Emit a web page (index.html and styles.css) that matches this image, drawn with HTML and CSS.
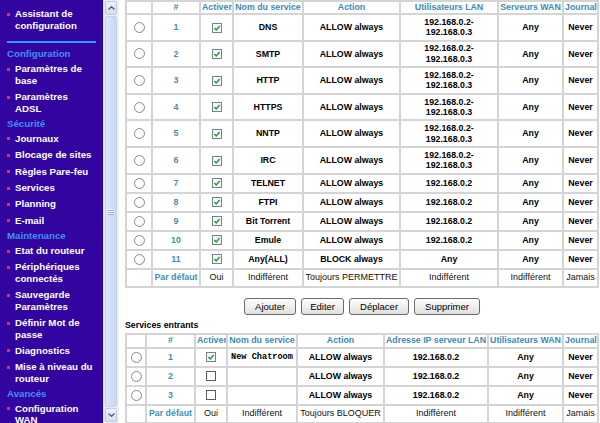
FILE: index.html
```html
<!DOCTYPE html>
<html lang="fr">
<head>
<meta charset="utf-8">
<title>Services</title>
<link rel="stylesheet" href="styles.css">
</head>
<body>
<div class="layout">
  <nav class="sidebar">
    <div class="item"><span class="bullet"></span><span>Assistant de<br>configuration</span></div>
    <hr class="divider">
    <div class="heading">Configuration</div>
    <div class="item"><span class="bullet"></span><span>Paramètres de<br>base</span></div>
    <div class="item"><span class="bullet"></span><span>Paramètres<br>ADSL</span></div>
    <div class="heading">Sécurité</div>
    <div class="item"><span class="bullet"></span><span>Journaux</span></div>
    <div class="item"><span class="bullet"></span><span>Blocage de sites</span></div>
    <div class="item"><span class="bullet"></span><span>Règles Pare-feu</span></div>
    <div class="item"><span class="bullet"></span><span>Services</span></div>
    <div class="item"><span class="bullet"></span><span>Planning</span></div>
    <div class="item"><span class="bullet"></span><span>E-mail</span></div>
    <div class="heading">Maintenance</div>
    <div class="item"><span class="bullet"></span><span>Etat du routeur</span></div>
    <div class="item"><span class="bullet"></span><span>Périphériques<br>connectés</span></div>
    <div class="item"><span class="bullet"></span><span>Sauvegarde<br>Paramètres</span></div>
    <div class="item"><span class="bullet"></span><span>Définir Mot de<br>passe</span></div>
    <div class="item"><span class="bullet"></span><span>Diagnostics</span></div>
    <div class="item"><span class="bullet"></span><span>Mise à niveau du<br>routeur</span></div>
    <div class="heading">Avancés</div>
    <div class="item"><span class="bullet"></span><span>Configuration<br>WAN</span></div>
  </nav>
  <div class="scrollbar">
    <div class="sb-btn"><svg viewBox="0 0 7 4" width="7" height="4"><path d="M0.5 3.5 L3.5 0.8 L6.5 3.5" fill="none" stroke="#4d6185" stroke-width="1.4"/></svg></div>
    <div class="sb-track"><div class="sb-thumb"><span class="grip"></span></div></div>
    <div class="sb-btn"><svg viewBox="0 0 7 4" width="7" height="4"><path d="M0.5 0.5 L3.5 3.2 L6.5 0.5" fill="none" stroke="#4d6185" stroke-width="1.4"/></svg></div>
  </div>
  <main class="content">
    <table class="grid out">
      <colgroup><col class="w26"><col class="w48"><col class="w33"><col class="w70"><col class="w97"><col class="w98"><col class="w65"><col class="w35"></colgroup>
      <tr class="head"><th></th><th>#</th><th>Activer</th><th>Nom du service</th><th>Action</th><th>Utilisateurs LAN</th><th>Serveurs WAN</th><th>Journal</th></tr>
      <tr class="tall"><td><span class="radio"></span></td><td class="num">1</td><td><svg class="check" viewBox="0 0 10 10"><rect x="0.5" y="0.5" width="9" height="9" fill="#f7f7f7" stroke="#71839a"/><path d="M2.4 5 L4.2 6.9 L7.7 3" fill="none" stroke="#22a022" stroke-width="1.5"/></svg></td><td>DNS</td><td>ALLOW always</td><td>192.168.0.2-<br>192.168.0.3</td><td>Any</td><td>Never</td></tr>
      <tr class="tall"><td><span class="radio"></span></td><td class="num">2</td><td><svg class="check" viewBox="0 0 10 10"><rect x="0.5" y="0.5" width="9" height="9" fill="#f7f7f7" stroke="#71839a"/><path d="M2.4 5 L4.2 6.9 L7.7 3" fill="none" stroke="#22a022" stroke-width="1.5"/></svg></td><td>SMTP</td><td>ALLOW always</td><td>192.168.0.2-<br>192.168.0.3</td><td>Any</td><td>Never</td></tr>
      <tr class="tall"><td><span class="radio"></span></td><td class="num">3</td><td><svg class="check" viewBox="0 0 10 10"><rect x="0.5" y="0.5" width="9" height="9" fill="#f7f7f7" stroke="#71839a"/><path d="M2.4 5 L4.2 6.9 L7.7 3" fill="none" stroke="#22a022" stroke-width="1.5"/></svg></td><td>HTTP</td><td>ALLOW always</td><td>192.168.0.2-<br>192.168.0.3</td><td>Any</td><td>Never</td></tr>
      <tr class="tall"><td><span class="radio"></span></td><td class="num">4</td><td><svg class="check" viewBox="0 0 10 10"><rect x="0.5" y="0.5" width="9" height="9" fill="#f7f7f7" stroke="#71839a"/><path d="M2.4 5 L4.2 6.9 L7.7 3" fill="none" stroke="#22a022" stroke-width="1.5"/></svg></td><td>HTTPS</td><td>ALLOW always</td><td>192.168.0.2-<br>192.168.0.3</td><td>Any</td><td>Never</td></tr>
      <tr class="tall"><td><span class="radio"></span></td><td class="num">5</td><td><svg class="check" viewBox="0 0 10 10"><rect x="0.5" y="0.5" width="9" height="9" fill="#f7f7f7" stroke="#71839a"/><path d="M2.4 5 L4.2 6.9 L7.7 3" fill="none" stroke="#22a022" stroke-width="1.5"/></svg></td><td>NNTP</td><td>ALLOW always</td><td>192.168.0.2-<br>192.168.0.3</td><td>Any</td><td>Never</td></tr>
      <tr class="tall"><td><span class="radio"></span></td><td class="num">6</td><td><svg class="check" viewBox="0 0 10 10"><rect x="0.5" y="0.5" width="9" height="9" fill="#f7f7f7" stroke="#71839a"/><path d="M2.4 5 L4.2 6.9 L7.7 3" fill="none" stroke="#22a022" stroke-width="1.5"/></svg></td><td>IRC</td><td>ALLOW always</td><td>192.168.0.2-<br>192.168.0.3</td><td>Any</td><td>Never</td></tr>
      <tr class="short"><td><span class="radio"></span></td><td class="num">7</td><td><svg class="check" viewBox="0 0 10 10"><rect x="0.5" y="0.5" width="9" height="9" fill="#f7f7f7" stroke="#71839a"/><path d="M2.4 5 L4.2 6.9 L7.7 3" fill="none" stroke="#22a022" stroke-width="1.5"/></svg></td><td>TELNET</td><td>ALLOW always</td><td>192.168.0.2</td><td>Any</td><td>Never</td></tr>
      <tr class="short"><td><span class="radio"></span></td><td class="num">8</td><td><svg class="check" viewBox="0 0 10 10"><rect x="0.5" y="0.5" width="9" height="9" fill="#f7f7f7" stroke="#71839a"/><path d="M2.4 5 L4.2 6.9 L7.7 3" fill="none" stroke="#22a022" stroke-width="1.5"/></svg></td><td>FTPI</td><td>ALLOW always</td><td>192.168.0.2</td><td>Any</td><td>Never</td></tr>
      <tr class="short"><td><span class="radio"></span></td><td class="num">9</td><td><svg class="check" viewBox="0 0 10 10"><rect x="0.5" y="0.5" width="9" height="9" fill="#f7f7f7" stroke="#71839a"/><path d="M2.4 5 L4.2 6.9 L7.7 3" fill="none" stroke="#22a022" stroke-width="1.5"/></svg></td><td>Bit Torrent</td><td>ALLOW always</td><td>192.168.0.2</td><td>Any</td><td>Never</td></tr>
      <tr class="short"><td><span class="radio"></span></td><td class="num">10</td><td><svg class="check" viewBox="0 0 10 10"><rect x="0.5" y="0.5" width="9" height="9" fill="#f7f7f7" stroke="#71839a"/><path d="M2.4 5 L4.2 6.9 L7.7 3" fill="none" stroke="#22a022" stroke-width="1.5"/></svg></td><td>Emule</td><td>ALLOW always</td><td>192.168.0.2</td><td>Any</td><td>Never</td></tr>
      <tr class="short"><td><span class="radio"></span></td><td class="num">11</td><td><svg class="check" viewBox="0 0 10 10"><rect x="0.5" y="0.5" width="9" height="9" fill="#f7f7f7" stroke="#71839a"/><path d="M2.4 5 L4.2 6.9 L7.7 3" fill="none" stroke="#22a022" stroke-width="1.5"/></svg></td><td>Any(ALL)</td><td>BLOCK always</td><td>Any</td><td>Any</td><td>Never</td></tr>
      <tr class="default"><td></td><td class="num">Par défaut</td><td>Oui</td><td>Indifférent</td><td>Toujours PERMETTRE</td><td>Indifférent</td><td>Indifférent</td><td>Jamais</td></tr>
    </table>

    <div class="buttons">
      <button class="btn">Ajouter</button>
      <button class="btn btn-narrow">Editer</button>
      <button class="btn">Déplacer</button>
      <button class="btn">Supprimer</button>
    </div>

    <div class="caption">Services entrants</div>

    <table class="grid in">
      <colgroup><col class="w20"><col class="w49"><col class="w32"><col class="w70"><col class="w87"><col class="w104"><col class="w75"><col class="w35"></colgroup>
      <tr class="head2"><th></th><th>#</th><th>Activer</th><th>Nom du service</th><th>Action</th><th>Adresse IP serveur LAN</th><th>Utilisateurs WAN</th><th>Journal</th></tr>
      <tr class="short"><td><span class="radio"></span></td><td class="num">1</td><td><svg class="check" viewBox="0 0 10 10"><rect x="0.5" y="0.5" width="9" height="9" fill="#f7f7f7" stroke="#71839a"/><path d="M2.4 5 L4.2 6.9 L7.7 3" fill="none" stroke="#22a022" stroke-width="1.5"/></svg></td><td class="mono">New Chatroom</td><td>ALLOW always</td><td>192.168.0.2</td><td>Any</td><td>Never</td></tr>
      <tr class="short"><td><span class="radio"></span></td><td class="num">2</td><td><svg class="check" viewBox="0 0 10 10"><rect x="0.5" y="0.5" width="9" height="9" fill="#ffffff" stroke="#5a5a5a"/></svg></td><td></td><td>ALLOW always</td><td>192.168.0.2</td><td>Any</td><td>Never</td></tr>
      <tr class="short"><td><span class="radio"></span></td><td class="num">3</td><td><svg class="check" viewBox="0 0 10 10"><rect x="0.5" y="0.5" width="9" height="9" fill="#ffffff" stroke="#5a5a5a"/></svg></td><td></td><td>ALLOW always</td><td>192.168.0.2</td><td>Any</td><td>Never</td></tr>
      <tr class="default"><td></td><td class="num">Par défaut</td><td>Oui</td><td>Indifférent</td><td>Toujours BLOQUER</td><td>Indifférent</td><td>Indifférent</td><td>Jamais</td></tr>
    </table>
  </main>
</div>
</body>
</html>
```

FILE: styles.css
```css
* { box-sizing: border-box; }

html, body {
  margin: 0;
  padding: 0;
}

body {
  width: 600px;
  height: 423px;
  overflow: hidden;
  background: #ffffff;
  font-family: "Liberation Sans", Arial, sans-serif;
}

.layout {
  display: flex;
  height: 423px;
}

/* ---------- Sidebar ---------- */
.sidebar {
  width: 103px;
  flex: none;
  background: #3205a0;
  color: #ffffff;
  padding: 8.3px 0 0 7px;
  overflow: hidden;
  font-size: 9.7px;
  font-weight: bold;
  line-height: 11.4px;
}

.item {
  display: flex;
  gap: 5px;
  margin-bottom: 5px;
}

.bullet {
  flex: none;
  width: 3px;
  height: 3px;
  margin-top: 4.5px;
  background: #d6384f;
}

.heading {
  color: #3c92f4;
  margin-top: -1.3px;
  margin-bottom: 3.7px;
}

.divider {
  border: 0;
  width: 89px;
  height: 2px;
  margin: 10px 0 6.5px 0;
  background: #2f9bff;
}

/* ---------- Frame scrollbar ---------- */
.scrollbar {
  width: 15px;
  flex: none;
  display: flex;
  flex-direction: column;
  background: #e9eef8;
  border-left: 1px solid #d6e0f2;
}

.sb-btn {
  height: 14px;
  margin: 1px 1px;
  display: flex;
  align-items: center;
  justify-content: center;
  border: 1px solid #bccbe6;
  border-radius: 2px;
  background: linear-gradient(#eef3fb, #d3def3);
}

.sb-track {
  flex: 1;
  padding: 0 1px;
}

.sb-thumb {
  height: 100%;
  display: flex;
  align-items: center;
  justify-content: center;
  border: 1px solid #c3d2ee;
  border-radius: 2px;
  background: linear-gradient(90deg, #dbe6f8, #c9d8f4);
}

.grip {
  width: 6px;
  height: 6px;
  background: repeating-linear-gradient(#eef3fc 0 1px, #9fb2d8 1px 2px);
}

/* ---------- Main content ---------- */
.content {
  flex: 1;
  padding: 0 3px 0 6px;
  border-left: 1px solid #f1f1ea;
}

.grid {
  width: 472px;
  table-layout: fixed;
  border-collapse: collapse;
  font-size: 8.8px;
  font-weight: bold;
  color: #000000;
}

.w20 { width: 20px; }
.w26 { width: 26px; }
.w32 { width: 32px; }
.w33 { width: 33px; }
.w35 { width: 35px; }
.w48 { width: 48px; }
.w49 { width: 49px; }
.w65 { width: 65px; }
.w70 { width: 70px; }
.w75 { width: 75px; }
.w87 { width: 87px; }
.w97 { width: 97px; }
.w98 { width: 98px; }
.w104 { width: 104px; }

.grid th,
.grid td {
  border: 2px solid #d5d5d5;
  padding: 0 1px;
  text-align: center;
  vertical-align: middle;
  line-height: 10.5px;
  white-space: nowrap;
  overflow: hidden;
}

.grid th {
  color: #3a8cb6;
  font-weight: bold;
}

.head th { height: 13px; }
.head2 th { height: 14px; }
.tall td { height: 26.6px; }
.short td { height: 19px; }
.default td { height: 18px; }

.grid .num {
  color: #3f8fb8;
}

.default td {
  font-weight: normal;
  font-size: 9px;
  color: #111111;
}

.default td.num {
  font-weight: bold;
  font-size: 8.8px;
  color: #3f8fb8;
}

.mono {
  font-family: "Liberation Mono", "Courier New", monospace;
  font-size: 8.6px;
}

.radio {
  display: inline-block;
  width: 11px;
  height: 11px;
  vertical-align: middle;
  border: 1px solid #8e8e8e;
  border-radius: 50%;
  background: radial-gradient(circle at 40% 40%, #ffffff 40%, #e6e6e6 100%);
}

.check {
  display: inline-block;
  width: 10px;
  height: 10px;
  vertical-align: middle;
}

/* ---------- Buttons ---------- */
.buttons {
  display: flex;
  justify-content: center;
  gap: 5px;
  margin-top: 10px;
}

.btn {
  height: 17px;
  padding: 0 10px;
  font-family: "Liberation Sans", Arial, sans-serif;
  font-size: 9.5px;
  color: #000000;
  border: 1px solid #6b6b6b;
  border-radius: 3px;
  background: linear-gradient(#fdfdfd, #efefef 55%, #dedede);
}

.btn-narrow {
  padding: 0 8px;
}

.caption {
  margin-top: 4px;
  margin-bottom: 2px;
  font-size: 8.8px;
  font-weight: bold;
  line-height: 12px;
  color: #000000;
}
```
